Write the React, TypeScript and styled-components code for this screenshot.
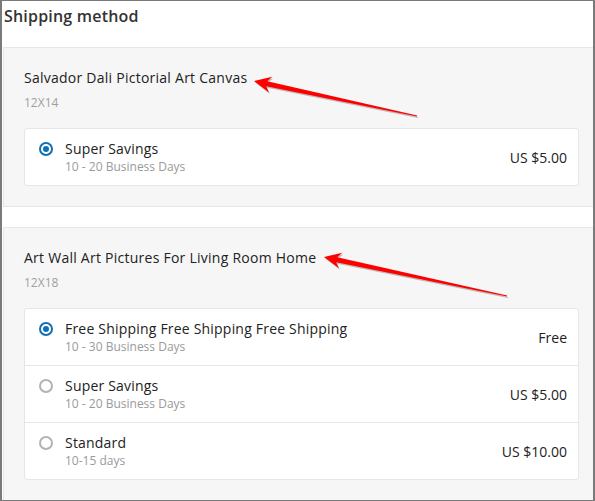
import React from "react";
import styled, { createGlobalStyle } from "styled-components";

const GlobalStyle = createGlobalStyle`
  html, body {
    margin: 0;
    padding: 0;
    background: #fff;
  }
  body {
    font-family: "Open Sans", "Liberation Sans", sans-serif;
  }
`;

interface IShippingOption {
  name: string;
  days: string;
  price: string;
  checked?: boolean;
};

interface IProduct {
  title: string;
  size: string;
  options: IShippingOption[];
};

const products: IProduct[] = [
  {
    title: "Salvador Dali Pictorial Art Canvas",
    size: "12X14",
    options: [
      { name: "Super Savings", days: "10 - 20 Business Days", price: "US $5.00", checked: true },
    ],
  },
  {
    title: "Art Wall Art Pictures For Living Room Home",
    size: "12X18",
    options: [
      { name: "Free Shipping Free Shipping Free Shipping", days: "10 - 30 Business Days", price: "Free", checked: true },
      { name: "Super Savings", days: "10 - 20 Business Days", price: "US $5.00" },
      { name: "Standard", days: "10-15 days", price: "US $10.00" },
    ],
  },
];

const Frame = styled.div`
  position: relative;
  width: 595px;
  height: 501px;
  box-sizing: border-box;
  border: 1px solid #7a7a7a;
  border-left-width: 2px;
  border-right-width: 2px;
  overflow: hidden;
  background: #fff;
  padding-left: 1px;
`;

const Heading = styled.h2`
  margin: 0;
  padding: 5px 0 0 1px;
  font-size: 16px;
  line-height: 20px;
  font-weight: 600;
  letter-spacing: 0.2px;
  color: #333;
`;

const Cards = styled.div`
  display: flex;
  flex-direction: column;
  gap: 20px;
  margin-top: 21px;
  margin-right: -3px;
`;

const Card = styled.section`
  background: #f6f6f6;
  border: 1px solid #e6e6e6;
  padding: 20px 16px 20px 20px;
`;

const ProductTitle = styled.div`
  font-size: 14px;
  line-height: 20px;
  letter-spacing: 0.25px;
  color: #222;
`;

const Size = styled.div`
  margin-top: 6px;
  font-size: 12px;
  line-height: 18px;
  color: #a0a0a0;
`;

const OptionList = styled.div`
  margin-top: 16px;
  background: #fff;
  border: 1px solid #e6e6e6;
  border-radius: 3px;
`;

const OptionRow = styled.label`
  display: flex;
  align-items: center;
  padding: 10px 11px 10px 14px;
  height: 36px;
  & + & {
    border-top: 1px solid #e6e6e6;
  }
`;

const Radio = styled.span<{ $checked?: boolean }>`
  flex: none;
  align-self: flex-start;
  margin-top: 3px;
  width: 14px;
  height: 14px;
  box-sizing: border-box;
  border-radius: 50%;
  border: 2px solid ${(p) => (p.$checked ? "#1170b4" : "#b3b3b3")};
  display: flex;
  align-items: center;
  justify-content: center;
  &::after {
    content: "";
    width: 6px;
    height: 6px;
    border-radius: 50%;
    background: ${(p) => (p.$checked ? "#1170b4" : "transparent")};
  }
`;

const OptionText = styled.div`
  flex: 1;
  margin-left: 12px;
`;

const OptionName = styled.div`
  font-size: 14px;
  line-height: 20px;
  letter-spacing: 0.2px;
  color: #222;
`;

const OptionDays = styled.div`
  font-size: 12px;
  line-height: 16px;
  color: #9a9a9a;
`;

const Price = styled.div`
  font-size: 14px;
  color: #222;
`;

const Overlay = styled.svg`
  position: absolute;
  left: -2px;
  top: -1px;
  pointer-events: none;
`;

const arrowPoints = (tx: number, ty: number, sx: number, sy: number) => {
  const len = Math.hypot(tx - sx, ty - sy);
  const dx = (tx - sx) / len;
  const dy = (ty - sy) / len;
  const nx = -dy;
  const ny = dx;
  const head = 17;
  const headW = 8;
  const bx = tx - dx * head;
  const by = ty - dy * head;
  const nbx = tx - dx * (head - 4);
  const nby = ty - dy * (head - 4);
  const pts = [
    [tx, ty],
    [bx + nx * headW, by + ny * headW],
    [nbx + nx * 2.6, nby + ny * 2.6],
    [sx + nx * 0.6, sy + ny * 0.6],
    [sx - nx * 0.6, sy - ny * 0.6],
    [nbx - nx * 2.6, nby - ny * 2.6],
    [bx - nx * headW, by - ny * headW],
  ];
  return pts.map((p) => p.join(",")).join(" ");
};

const Arrow = ({ tip, tail }: { tip: [number, number]; tail: [number, number] }) => {
  const pts = arrowPoints(tip[0], tip[1], tail[0], tail[1]);
  return (
    <g>
      <polygon points={pts} fill="#8a8a8a" opacity="0.55" transform="translate(1,1.5)" />
      <polygon points={pts} fill="#ff0000" />
    </g>
  );
};

export default function App() {
  return (
    <>
      <GlobalStyle />
      <Frame>
        <Heading>Shipping method</Heading>
        <Cards>
          {products.map((product) => (
            <Card key={product.title}>
              <ProductTitle>{product.title}</ProductTitle>
              <Size>{product.size}</Size>
              <OptionList>
                {product.options.map((opt) => (
                  <OptionRow key={opt.name}>
                    <Radio $checked={opt.checked} />
                    <OptionText>
                      <OptionName>{opt.name}</OptionName>
                      <OptionDays>{opt.days}</OptionDays>
                    </OptionText>
                    <Price>{opt.price}</Price>
                  </OptionRow>
                ))}
              </OptionList>
            </Card>
          ))}
        </Cards>
        <Overlay width="595" height="501" viewBox="0 0 595 501">
          <Arrow tip={[254, 81]} tail={[417, 116]} />
          <Arrow tip={[324, 257]} tail={[507, 296]} />
        </Overlay>
      </Frame>
    </>
  );
}
